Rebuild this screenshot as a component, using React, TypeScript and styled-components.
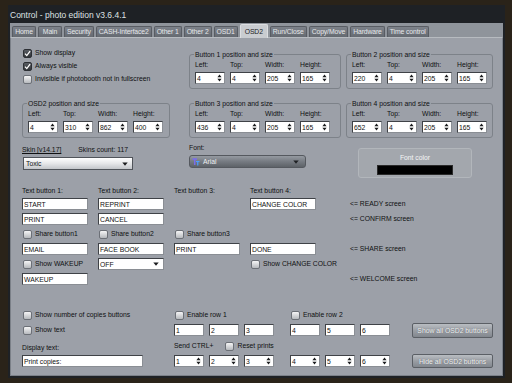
import React from "react";
import styled, { createGlobalStyle } from "styled-components";

const PANEL = "#9ca0a8";

const Global = createGlobalStyle`
  html, body { margin: 0; padding: 0; background: #2a2319; }
  body {
    font-family: "Liberation Sans", Arial, sans-serif;
    font-size: 6.8px;
    color: #0f1011;
  }
  * { box-sizing: border-box; }
`;

const Window = styled.div`
  margin: 5px 0 0 8px;
  width: 497px;
  height: 373px;
  background: #1e2125;
  padding: 0 2px 2px 2px;
  display: flex;
  flex-direction: column;
`;

const TitleBar = styled.div`
  height: 18px;
  line-height: 20px;
  font-size: 8.5px;
  color: #dfe1e4;
  white-space: nowrap;
`;

const Client = styled.div`
  flex: 1;
  background: #8f949b;
  display: flex;
  flex-direction: column;
`;

const TabRow = styled.div`
  height: 14px;
  display: flex;
  align-items: flex-end;
  gap: 2px;
  padding-left: 2px;
`;

const Tab = styled.div<{ $active?: boolean }>`
  position: relative;
  z-index: 1;
  min-width: 24px;
  text-align: center;
  height: ${(p) => (p.$active ? 14 : 11)}px;
  line-height: ${(p) => (p.$active ? 13 : 10)}px;
  padding: 0 ${(p) => (p.$active ? 4 : 2)}px;
  margin-bottom: ${(p) => (p.$active ? -1 : 0)}px;
  background: ${(p) => (p.$active ? "#c9ccd0" : "linear-gradient(#7d828a, #656a71)")};
  color: ${(p) => (p.$active ? "#1a1b1d" : "#e6e8eb")};
  border: 1px solid ${(p) => (p.$active ? "#dcdee1" : "#585c63")};
  border-bottom: none;
  border-radius: 2px 2px 0 0;
  white-space: nowrap;
  letter-spacing: -0.1px;
`;

const Panel = styled.div`
  flex: 1;
  background: ${PANEL};
  border: 1px solid #7b8088;
  border-top-color: #b7bbc0;
  padding: 9px 9px 0 11px;
  display: flex;
  flex-direction: column;
`;

/* ---------- generic controls ---------- */

const Text = styled.span`
  line-height: 8px;
  white-space: nowrap;
`;

const Underlined = styled(Text)`
  text-decoration: underline;
`;

const CheckRow = styled.label`
  display: flex;
  align-items: center;
  gap: 3px;
  height: 12px;
  margin-left: 1px;
  white-space: nowrap;
  line-height: 8px;
`;

const Box = styled.span<{ $checked?: boolean }>`
  width: 9px;
  height: 9px;
  flex: none;
  border-radius: 2px;
  border: 1px solid ${(p) => (p.$checked ? "#2c2f34" : "#6c7077")};
  background: ${(p) =>
    p.$checked ? "linear-gradient(#595d63, #303338)" : "linear-gradient(#f5f5f6, #b6b9bd)"};
  display: flex;
  align-items: center;
  justify-content: center;
`;

const Check = ({ label, checked }: { label: string; checked?: boolean }) => (
  <CheckRow>
    <Box $checked={checked}>
      {checked && (
        <svg width="7" height="7" viewBox="0 0 7 7">
          <path d="M1 3.6 L2.8 5.6 L6.1 1.2" stroke="#fff" strokeWidth="1.3" fill="none" />
        </svg>
      )}
    </Box>
    {label}
  </CheckRow>
);

const Field = styled.div<{ $w?: number }>`
  width: ${(p) => p.$w ?? 66}px;
  height: 12px;
  background: #fff;
  border: 1px solid #3f4247;
  border-right-color: #8a8e94;
  border-bottom-color: #8a8e94;
  padding: 0 2px 0 1px;
  display: flex;
  align-items: center;
  justify-content: space-between;
  line-height: 9px;
  white-space: nowrap;
  color: #111;
`;

const SpinArrows = () => (
  <svg width="5" height="8" viewBox="0 0 5 8">
    <path d="M2.5 0.6 L4.6 3.2 H0.4 Z M0.4 4.8 H4.6 L2.5 7.4 Z" fill="#1b1c1e" />
  </svg>
);

const Spinner = ({ value }: { value: string }) => (
  <Field $w={30}>
    {value}
    <SpinArrows />
  </Field>
);

const DownArrow = ({ color = "#1b1c1e" }: { color?: string }) => (
  <svg width="6" height="4" viewBox="0 0 6 4">
    <path d="M0.3 0.4 H5.7 L3 3.7 Z" fill={color} />
  </svg>
);

const SelectBox = styled(Field)`
  padding-right: 4px;
`;

/* ---------- top section ---------- */

const TopSection = styled.div`
  display: flex;
  gap: 19px;
`;

const LeftCol = styled.div`
  width: 148px;
  display: flex;
  flex-direction: column;
`;

const CheckList = styled.div`
  display: flex;
  flex-direction: column;
  gap: 1px;
  margin-bottom: 18px;
`;

const GroupGrid = styled.div`
  display: grid;
  grid-template-columns: 152px 147px;
  column-gap: 5px;
  row-gap: 14px;
  margin-top: 7px;
`;

const Group = styled.div`
  position: relative;
  border: 1px solid #7d8289;
  border-radius: 3px;
  padding: 6px 0 4px 5px;
`;

const GroupTitle = styled.span`
  position: absolute;
  top: -4px;
  left: 4px;
  padding: 0 1px;
  background: ${PANEL};
  line-height: 8px;
  white-space: nowrap;
`;

const PosFields = styled.div`
  display: grid;
  grid-template-columns: repeat(4, 30px);
  grid-template-rows: 8px 12px;
  column-gap: 5px;
  row-gap: 3px;
`;

const PosGroup = ({ title, values }: { title: string; values: string[] }) => (
  <Group>
    <GroupTitle>{title}</GroupTitle>
    <PosFields>
      {["Left:", "Top:", "Width:", "Height:"].map((l) => (
        <Text key={l}>{l}</Text>
      ))}
      {values.map((v, i) => (
        <Spinner key={i} value={v} />
      ))}
    </PosFields>
  </Group>
);

/* ---------- middle section ---------- */

const MidSection = styled.div`
  display: flex;
  align-items: flex-start;
  margin-top: 6px;
`;

const SkinBlock = styled.div`
  width: 148px;
  padding-top: 2px;
  display: flex;
  flex-direction: column;
  gap: 3px;
`;

const SkinHeader = styled.div`
  display: flex;
  gap: 17px;
`;

const SkinSelect = styled.div`
  width: 110px;
  height: 13px;
  margin-left: 1px;
  border: 1px solid #50545a;
  background: linear-gradient(#ffffff, #e6e7e9 50%, #c3c6ca);
  padding: 0 4px 0 2px;
  display: flex;
  align-items: center;
  justify-content: space-between;
  line-height: 9px;
`;

const FontBlock = styled.div`
  width: 117px;
  margin-left: 19px;
  display: flex;
  flex-direction: column;
  gap: 3px;
`;

const FontSelect = styled.div`
  height: 13px;
  border: 1px solid #55595f;
  border-radius: 3px;
  background: linear-gradient(#959aa1, #767b82 50%, #5d6268);
  padding: 0 6px 0 2px;
  display: flex;
  align-items: center;
  gap: 3px;
  color: #eceef0;
  line-height: 9px;
`;

const FontIcon = () => (
  <svg width="8" height="8" viewBox="0 0 8 8">
    <path d="M0.5 1 H5 M2.75 1 V7" stroke="#7a6cf2" strokeWidth="1.4" />
    <path d="M4 3.5 H7.5 M5.75 3.5 V7.5" stroke="#48a0ff" strokeWidth="1.2" />
  </svg>
);

const Grow = styled.span`
  flex: 1;
`;

const FontColorBox = styled.div`
  width: 114px;
  height: 30px;
  margin: 4px 0 0 52px;
  border: 1px solid #b2b6bb;
  border-radius: 3px;
  background: #a3a7ad;
  display: flex;
  flex-direction: column;
  align-items: center;
  padding-top: 5px;
  gap: 3px;
  color: #f4f5f6;
`;

const Swatch = styled.div`
  width: 76px;
  height: 10px;
  background: #000;
  border: 1px solid #2a2a2a;
`;

/* ---------- text buttons grid ---------- */

const TextGrid = styled.div`
  margin-top: 9px;
  display: grid;
  grid-template-columns: 66px 66px 66px 66px auto;
  grid-template-rows: 8px repeat(6, 12px);
  column-gap: 10px;
  row-gap: 3px;
  align-items: center;
`;

const Note = styled(Text)`
  margin-left: 24px;
`;

type Cell =
  | { k: "e" }
  | { k: "l"; t: string }
  | { k: "i"; t: string }
  | { k: "c"; t: string }
  | { k: "s"; t: string }
  | { k: "n"; t: string };

const E: Cell = { k: "e" };
const rows: Cell[][] = [
  [
    { k: "l", t: "Text button 1:" },
    { k: "l", t: "Text button 2:" },
    { k: "l", t: "Text button 3:" },
    { k: "l", t: "Text button 4:" },
    E,
  ],
  [{ k: "i", t: "START" }, { k: "i", t: "REPRINT" }, E, { k: "i", t: "CHANGE COLOR" }, { k: "n", t: "<= READY screen" }],
  [{ k: "i", t: "PRINT" }, { k: "i", t: "CANCEL" }, E, E, { k: "n", t: "<= CONFIRM screen" }],
  [{ k: "c", t: "Share button1" }, { k: "c", t: "Share button2" }, { k: "c", t: "Share button3" }, E, E],
  [{ k: "i", t: "EMAIL" }, { k: "i", t: "FACE BOOK" }, { k: "i", t: "PRINT" }, { k: "i", t: "DONE" }, { k: "n", t: "<= SHARE screen" }],
  [{ k: "c", t: "Show WAKEUP" }, { k: "s", t: "OFF" }, E, { k: "c", t: "Show CHANGE COLOR" }, E],
  [{ k: "i", t: "WAKEUP" }, E, E, E, { k: "n", t: "<= WELCOME screen" }],
];

const renderCell = (c: Cell, key: string) => {
  switch (c.k) {
    case "e":
      return <span key={key} />;
    case "l":
      return <Text key={key}>{c.t}</Text>;
    case "i":
      return <Field key={key}>{c.t}</Field>;
    case "c":
      return <Check key={key} label={c.t} />;
    case "s":
      return (
        <SelectBox key={key}>
          {c.t}
          <DownArrow />
        </SelectBox>
      );
    case "n":
      return <Note key={key}>{c.t}</Note>;
  }
};

/* ---------- bottom section ---------- */

const BottomGrid = styled.div`
  margin-top: 24px;
  display: grid;
  grid-template-columns: 152px 116px 101px 1fr;
  grid-template-rows: 12px 12px 13px 12px;
  row-gap: 3px;
  align-items: center;
`;

const Trio = styled.div`
  display: flex;
  gap: 5px;
`;

const SendRow = styled.div`
  display: flex;
  align-items: center;
  gap: 11px;
  align-self: end;
  height: 12px;
`;

const BottomLabel = styled(Text)`
  align-self: end;
`;

const ActionButton = styled.div<{ $h: number }>`
  justify-self: end;
  width: 81px;
  height: ${(p) => p.$h}px;
  border: 1px solid #5b5f65;
  border-radius: 2px;
  background: linear-gradient(#b9bdc2, #9a9ea4 50%, #82878e);
  color: #f3f4f5;
  text-shadow: 0 0 1px #5a5e64;
  display: flex;
  align-items: center;
  justify-content: center;
  white-space: nowrap;
  line-height: 9px;
`;

const tabs = [
  "Home",
  "Main",
  "Security",
  "CASH-Interface2",
  "Other 1",
  "Other 2",
  "OSD1",
  "OSD2",
  "Run/Close",
  "Copy/Move",
  "Hardware",
  "Time control",
];

export default function App() {
  return (
    <>
      <Global />
      <Window>
        <TitleBar>Control - photo edition v3.6.4.1</TitleBar>
        <Client>
          <TabRow>
            {tabs.map((t) => (
              <Tab key={t} $active={t === "OSD2"}>
                {t}
              </Tab>
            ))}
          </TabRow>
          <Panel>
            <TopSection>
              <LeftCol>
                <CheckList>
                  <Check label="Show display" checked />
                  <Check label="Always visible" checked />
                  <Check label="Invisible if photobooth not in fullscreen" />
                </CheckList>
                <PosGroup title="OSD2 position and size" values={["4", "310", "862", "400"]} />
              </LeftCol>
              <GroupGrid>
                <PosGroup title="Button 1 position and size" values={["4", "4", "205", "165"]} />
                <PosGroup title="Button 2 position and size" values={["220", "4", "205", "165"]} />
                <PosGroup title="Button 3 position and size" values={["436", "4", "205", "165"]} />
                <PosGroup title="Button 4 position and size" values={["652", "4", "205", "165"]} />
              </GroupGrid>
            </TopSection>

            <MidSection>
              <SkinBlock>
                <SkinHeader>
                  <Underlined>Skin [v14.17]</Underlined>
                  <Text>Skins count: 117</Text>
                </SkinHeader>
                <SkinSelect>
                  Toxic
                  <DownArrow />
                </SkinSelect>
              </SkinBlock>
              <FontBlock>
                <Text>Font:</Text>
                <FontSelect>
                  <FontIcon />
                  Arial
                  <Grow />
                  <DownArrow color="#1f2124" />
                </FontSelect>
              </FontBlock>
              <FontColorBox>
                <Text>Font color</Text>
                <Swatch />
              </FontColorBox>
            </MidSection>

            <TextGrid>{rows.flatMap((r, ri) => r.map((c, ci) => renderCell(c, `${ri}-${ci}`)))}</TextGrid>

            <BottomGrid>
              <Check label="Show number of copies buttons" />
              <Check label="Enable row 1" />
              <Check label="Enable row 2" />
              <span />

              <Check label="Show text" />
              <Trio>
                <Field $w={30}>1</Field>
                <Field $w={30}>2</Field>
                <Field $w={30}>3</Field>
              </Trio>
              <Trio>
                <Field $w={30}>4</Field>
                <Field $w={30}>5</Field>
                <Field $w={30}>6</Field>
              </Trio>
              <ActionButton $h={15}>Show all OSD2 buttons</ActionButton>

              <BottomLabel>Display text:</BottomLabel>
              <SendRow>
                <Text>Send CTRL+</Text>
                <Check label="Reset prints" />
              </SendRow>
              <span />
              <span />

              <Field $w={121}>Print copies:</Field>
              <Trio>
                <Spinner value="1" />
                <Spinner value="2" />
                <Spinner value="3" />
              </Trio>
              <Trio>
                <Spinner value="4" />
                <Spinner value="5" />
                <Spinner value="6" />
              </Trio>
              <ActionButton $h={14}>Hide all OSD2 buttons</ActionButton>
            </BottomGrid>
          </Panel>
        </Client>
      </Window>
    </>
  );
}
